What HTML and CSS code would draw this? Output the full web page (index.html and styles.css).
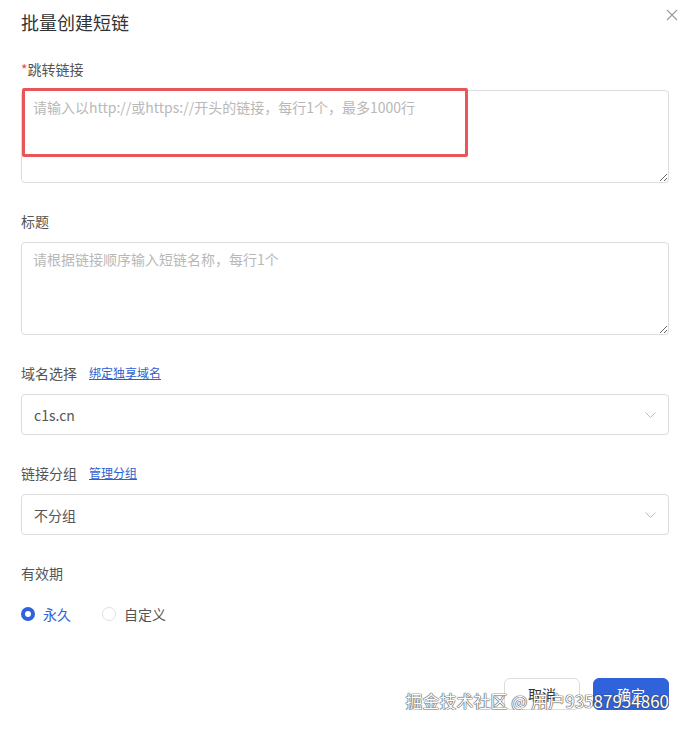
FILE: index.html
```html
<!DOCTYPE html>
<html lang="zh-CN">
  <head>
    <meta charset="UTF-8" />
    <meta name="viewport" content="width=device-width, initial-scale=1.0" />
    <title>批量创建短链</title>
    <link rel="stylesheet" href="styles.css">
  </head>

  <body>
    <div class="dialog">
      <div class="dialog-header">
        <div class="dialog-title">批量创建短链</div>
        <span class="close-btn">
          <svg width="12" height="12" viewBox="0 0 12 12">
            <path d="M1 1 L11 11 M11 1 L1 11" stroke="#9a9a9a" stroke-width="1.1" fill="none" />
          </svg>
        </span>
      </div>

      <div class="form-item">
        <div class="form-label"><span><span class="required">*</span>跳转链接</span></div>
        <textarea class="field-textarea" placeholder="请输入以http://或https://开头的链接，每行1个，最多1000行"></textarea>
        <div class="mark-box"></div>
      </div>

      <div class="form-item">
        <div class="form-label"><span>标题</span></div>
        <textarea class="field-textarea" placeholder="请根据链接顺序输入短链名称，每行1个"></textarea>
      </div>

      <div class="form-item">
        <div class="form-label"><span>域名选择</span><a class="label-link" href="#">绑定独享域名</a></div>
        <div class="field-select">
          <span>c1s.cn</span>
          <svg class="arrow" width="11" height="6" viewBox="0 0 11 6">
            <path d="M0.5 0.5 L5.5 5.5 L10.5 0.5" stroke="#bdbdbd" stroke-width="1" fill="none" />
          </svg>
        </div>
      </div>

      <div class="form-item">
        <div class="form-label"><span>链接分组</span><a class="label-link" href="#">管理分组</a></div>
        <div class="field-select">
          <span>不分组</span>
          <svg class="arrow" width="11" height="6" viewBox="0 0 11 6">
            <path d="M0.5 0.5 L5.5 5.5 L10.5 0.5" stroke="#bdbdbd" stroke-width="1" fill="none" />
          </svg>
        </div>
      </div>

      <div class="form-item">
        <div class="form-label"><span>有效期</span></div>
        <div class="radio-group">
          <label class="radio checked"><span class="radio-dot"></span>永久</label>
          <label class="radio"><span class="radio-dot"></span>自定义</label>
        </div>
      </div>

      <div class="dialog-footer">
        <button class="btn">取消</button>
        <button class="btn btn-primary">确定</button>
        <div class="watermark">掘金技术社区 @ 用户93587954860</div>
      </div>
    </div>
  </body>
</html>
```

FILE: styles.css
```css
body {
  margin: 0;
  background-color: #fff;
  font-family: "Noto Sans CJK SC", "Liberation Sans", sans-serif;
  color: #333;
}

.dialog {
  padding: 10px 21px 0;
}

.dialog-header {
  display: flex;
  justify-content: space-between;
  align-items: flex-start;
  margin-bottom: 25px;
}

.dialog-title {
  font-size: 18px;
  line-height: 24px;
  color: #333;
}

.close-btn {
  display: flex;
  margin-top: -1px;
  margin-right: -9px;
}

.form-item {
  position: relative;
  margin-bottom: 28px;
}

.form-label {
  display: flex;
  align-items: center;
  gap: 12px;
  height: 20px;
  font-size: 14px;
  line-height: 20px;
  color: #555;
  margin-bottom: 11px;
}

.required {
  color: #f0474f;
}

.label-link {
  font-size: 12px;
  color: #2f5fd0;
  text-decoration: underline;
}

.field-textarea {
  display: block;
  box-sizing: border-box;
  width: 100%;
  height: 93px;
  padding: 6px 11px;
  border: 1px solid #dcdcdc;
  border-radius: 4px;
  font-family: inherit;
  font-size: 14px;
  line-height: 20px;
  color: #333;
  outline: none;
}

.field-textarea::placeholder {
  color: #b8b8b8;
}

.mark-box {
  position: absolute;
  left: 1px;
  top: 29px;
  width: 440px;
  height: 63px;
  border: 3px solid #e8555b;
  border-radius: 2px;
}

.field-select {
  display: flex;
  justify-content: space-between;
  align-items: center;
  box-sizing: border-box;
  height: 41px;
  padding: 0 12px;
  border: 1px solid #dcdcdc;
  border-radius: 4px;
  font-size: 14px;
  color: #555;
}

.radio-group {
  display: flex;
  gap: 31px;
  padding-top: 10px;
}

.radio {
  display: flex;
  align-items: center;
  gap: 8px;
  font-size: 14px;
  line-height: 20px;
  color: #555;
}

.radio-dot {
  box-sizing: border-box;
  width: 14px;
  height: 14px;
  border: 1px solid #e0e0e0;
  border-radius: 50%;
  background-color: #fff;
}

.radio.checked {
  color: #2f62db;
}

.radio.checked .radio-dot {
  border: 4px solid #2f62db;
}

.dialog-footer {
  position: relative;
  display: flex;
  justify-content: flex-end;
  gap: 13px;
  margin-top: 54px;
}

.btn {
  width: 76px;
  height: 32px;
  border: 1px solid #dcdcdc;
  border-radius: 6px;
  background-color: #fff;
  font-family: inherit;
  font-size: 14px;
  color: #333;
}

.btn-primary {
  border-color: #2f62db;
  background-color: #2f62db;
  color: #fff;
}

.watermark {
  position: absolute;
  right: 0;
  top: 12px;
  font-size: 17px;
  line-height: 22px;
  color: #fff;
  text-shadow: 0 0 1px #444, 0 0 1px #444, 0 0 1px #444;
  white-space: nowrap;
}
```
